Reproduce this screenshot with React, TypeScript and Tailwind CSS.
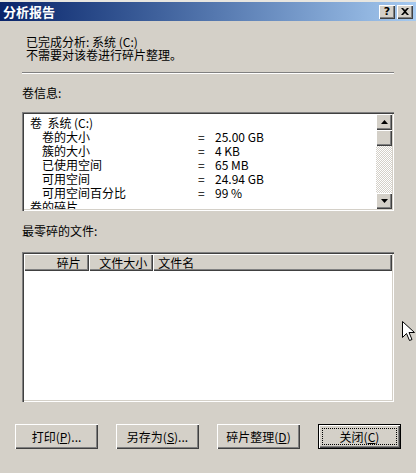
import React from "react";

const font = { fontFamily: '"Noto Sans CJK SC", "DejaVu Sans", sans-serif' };

function Btn({ children, focused }: { children: React.ReactNode; focused?: boolean }) {
  return (
    <div
      className={
        "w-[83px] h-[25px] flex items-center justify-center bg-[#d4d0c8] text-[12px] text-black " +
        (focused
          ? "border border-black shadow-[inset_1px_1px_0_#fff,inset_-1px_-1px_0_#404040,inset_-2px_-2px_0_#808080]"
          : "shadow-[inset_1px_1px_0_#fff,inset_-1px_-1px_0_#404040,inset_-2px_-2px_0_#808080]")
      }
    >
      {focused ? (
        <div className="w-[75px] h-[17px] border border-dotted border-black flex items-center justify-center">{children}</div>
      ) : (
        children
      )}
    </div>
  );
}

function U({ c }: { c: string }) {
  return <span className="underline">{c}</span>;
}

const rows: [string, string][] = [
  ["卷的大小", "25.00 GB"],
  ["簇的大小", "4 KB"],
  ["已使用空间", "65 MB"],
  ["可用空间", "24.94 GB"],
  ["可用空间百分比", "99 %"],
];

export default function App() {
  return (
    <div className="w-[416px] h-[473px] bg-[#d4d0c8] flex flex-col overflow-hidden relative" style={font}>
      <div className="h-[2px] bg-[#e8e6e0]" />
      <div className="h-[19px] mx-0 flex items-center justify-between px-[3px] bg-gradient-to-r from-[#0a246a] to-[#a6caf0]">
        <span className="text-white font-bold text-[13px] leading-none tracking-[0px]">分析报告</span>
        <div className="flex gap-[2px]">
          <div className="w-[16px] h-[14px] bg-[#d4d0c8] shadow-[inset_1px_1px_0_#fff,inset_-1px_-1px_0_#404040,inset_-2px_-2px_0_#808080] flex items-center justify-center text-[11px] font-bold leading-none text-black" style={{ fontFamily: '"DejaVu Sans", sans-serif' }}>?</div>
          <div className="w-[16px] h-[14px] bg-[#d4d0c8] shadow-[inset_1px_1px_0_#fff,inset_-1px_-1px_0_#404040,inset_-2px_-2px_0_#808080] flex items-center justify-center">
            <svg width="8" height="7" viewBox="0 0 8 7"><path d="M0 0h2l2 2 2-2h2L5 3.5 8 7H6L4 5 2 7H0l3-3.5z" fill="#000" /></svg>
          </div>
        </div>
      </div>
      <div className="pl-[26px] pt-[14px] text-[12px] leading-[13px] text-black">
        <div>已完成分析: 系统 (C:)</div>
        <div>不需要对该卷进行碎片整理。</div>
      </div>
      <div className="mx-[22px] mt-[11px] h-[2px] border-t border-[#808080] border-b border-b-white" />
      <div className="pl-[22px] pt-[12px] text-[12px] leading-[13px]">卷信息:</div>
      <div className="mx-[22px] mt-[13px] h-[99px] bg-white flex shadow-[inset_1px_1px_0_#808080,inset_2px_2px_0_#404040,inset_-1px_-1px_0_#fff,inset_-2px_-2px_0_#d4d0c8] p-[2px]">
        <div className="flex-1 pl-[6px] pt-[2px] text-[12px] leading-[14px] text-black overflow-hidden">
          <div>卷&nbsp; 系统 (C:)</div>
          {rows.map(([k, v]) => (
            <div key={k} className="flex">
              <span className="w-[168px] pl-[12px]">{k}</span>
              <span className="w-[17px]">=</span>
              <span>{v}</span>
            </div>
          ))}
          <div>卷的碎片</div>
        </div>
        <div className="w-[16px] flex flex-col bg-[repeating-conic-gradient(#d4d0c8_0%_25%,#fff_0%_50%)] bg-[length:2px_2px]">
          <div className="h-[16px] bg-[#d4d0c8] shadow-[inset_1px_1px_0_#fff,inset_-1px_-1px_0_#404040,inset_-2px_-2px_0_#808080] flex items-center justify-center">
            <svg width="7" height="4" viewBox="0 0 7 4"><path d="M3.5 0L7 4H0z" fill="#000" /></svg>
          </div>
          <div className="h-[16px] bg-[#d4d0c8] shadow-[inset_1px_1px_0_#fff,inset_-1px_-1px_0_#404040,inset_-2px_-2px_0_#808080]" />
          <div className="flex-1" />
          <div className="h-[16px] bg-[#d4d0c8] shadow-[inset_1px_1px_0_#fff,inset_-1px_-1px_0_#404040,inset_-2px_-2px_0_#808080] flex items-center justify-center">
            <svg width="7" height="4" viewBox="0 0 7 4"><path d="M0 0h7L3.5 4z" fill="#000" /></svg>
          </div>
        </div>
      </div>
      <div className="pl-[22px] pt-[13px] text-[12px] leading-[13px]">最零碎的文件:</div>
      <div className="mx-[22px] mt-[15px] h-[150px] bg-white flex flex-col shadow-[inset_1px_1px_0_#808080,inset_2px_2px_0_#404040,inset_-1px_-1px_0_#fff,inset_-2px_-2px_0_#d4d0c8] p-[2px]">
        <div className="h-[17px] flex text-[12px] leading-[13px]">
          <div className="w-[65px] bg-[#d4d0c8] shadow-[inset_1px_1px_0_#fff,inset_-1px_-1px_0_#404040,inset_-2px_-2px_0_#808080] flex items-center justify-end pr-[8px]">碎片</div>
          <div className="w-[65px] bg-[#d4d0c8] shadow-[inset_1px_1px_0_#fff,inset_-1px_-1px_0_#404040,inset_-2px_-2px_0_#808080] flex items-center justify-end pr-[6px]">文件大小</div>
          <div className="w-[240px] bg-[#d4d0c8] shadow-[inset_1px_1px_0_#fff,inset_-1px_-1px_0_#404040,inset_-2px_-2px_0_#808080] flex items-center pl-[5px]">文件名</div>
          <div className="flex-1 bg-[#d4d0c8] shadow-[inset_1px_1px_0_#fff,inset_-1px_-1px_0_#404040,inset_-2px_-2px_0_#808080]" />
        </div>
        <div className="flex-1" />
      </div>
      <div className="flex justify-between px-[15px] mt-[22px] text-[12px]">
        <Btn>打印(<U c="P" />)...</Btn>
        <Btn>另存为(<U c="S" />)...</Btn>
        <Btn>碎片整理(<U c="D" />)</Btn>
        <Btn focused>关闭(<U c="C" />)</Btn>
      </div>
      <svg className="absolute left-[402px] top-[321px]" width="13" height="21" viewBox="0 0 13 21">
        <path d="M0.5 0.5V16.5L4.5 12.5L7.5 19.5L10 18.5L7 11.5H12.5Z" fill="#fff" stroke="#000" strokeWidth="1" />
      </svg>
    </div>
  );
}
